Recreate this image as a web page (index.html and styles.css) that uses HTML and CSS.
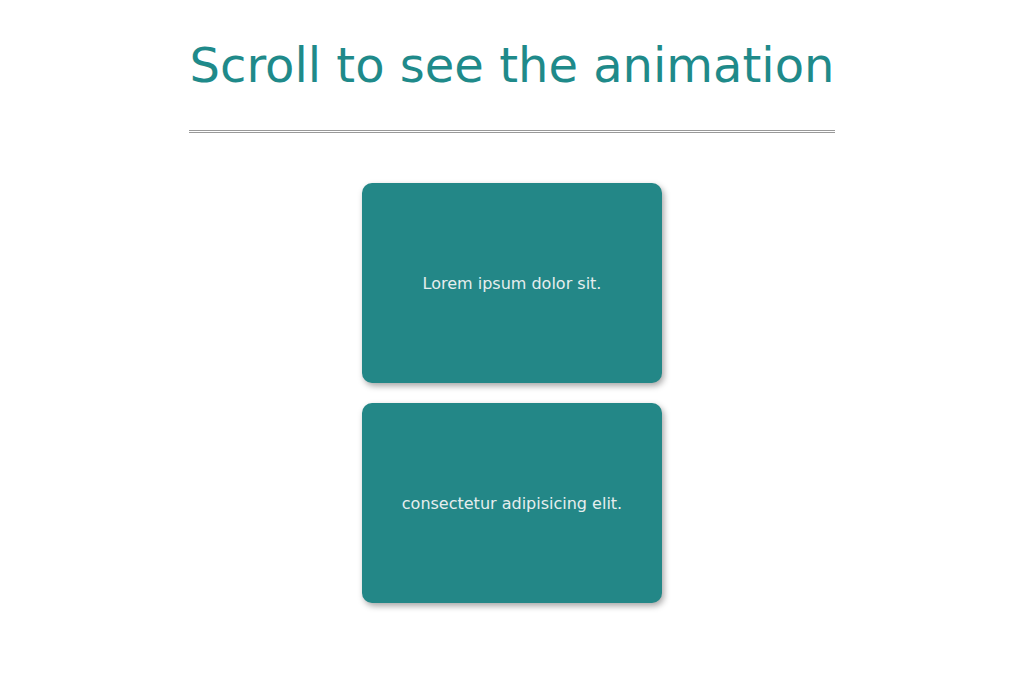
FILE: index.html
```html
<!DOCTYPE html>
<html>
<head>
<meta charset="utf-8">
<link rel="stylesheet" href="styles.css">
</head>
<body>
<div class="page">
  <h1 class="title">Scroll to see the animation</h1>
  <hr class="divider">
  <div class="cards">
    <div class="card">Lorem ipsum dolor sit.</div>
    <div class="card">consectetur adipisicing elit.</div>
  </div>
</div>
</body>
</html>
```
FILE: styles.css
```css
html, body {
  margin: 0;
  padding: 0;
  background: #ffffff;
  font-family: "DejaVu Sans", sans-serif;
}
.page {
  width: 646px;
  margin: 0 auto;
  padding-bottom: 60px;
  display: flex;
  flex-direction: column;
  align-items: center;
}
.title {
  margin: 36px 0 0 0;
  font-size: 48px;
  font-weight: normal;
  line-height: 58px;
  color: #1f8a8a;
  text-align: center;
}
.divider {
  width: 100%;
  box-sizing: content-box;
  margin: 36px 0 0 0;
  height: 1px;
  border: none;
  border-top: 1px solid #999999;
  border-bottom: 1px solid #999999;
}
.cards {
  margin-top: 50px;
  display: flex;
  flex-direction: column;
  gap: 20px;
}
.card {
  width: 300px;
  height: 200px;
  background: #238787;
  border-radius: 10px;
  box-shadow: 2px 3px 6px rgba(0, 0, 0, 0.35);
  color: #e6eeee;
  font-size: 16px;
  display: flex;
  align-items: center;
  justify-content: center;
}
```
